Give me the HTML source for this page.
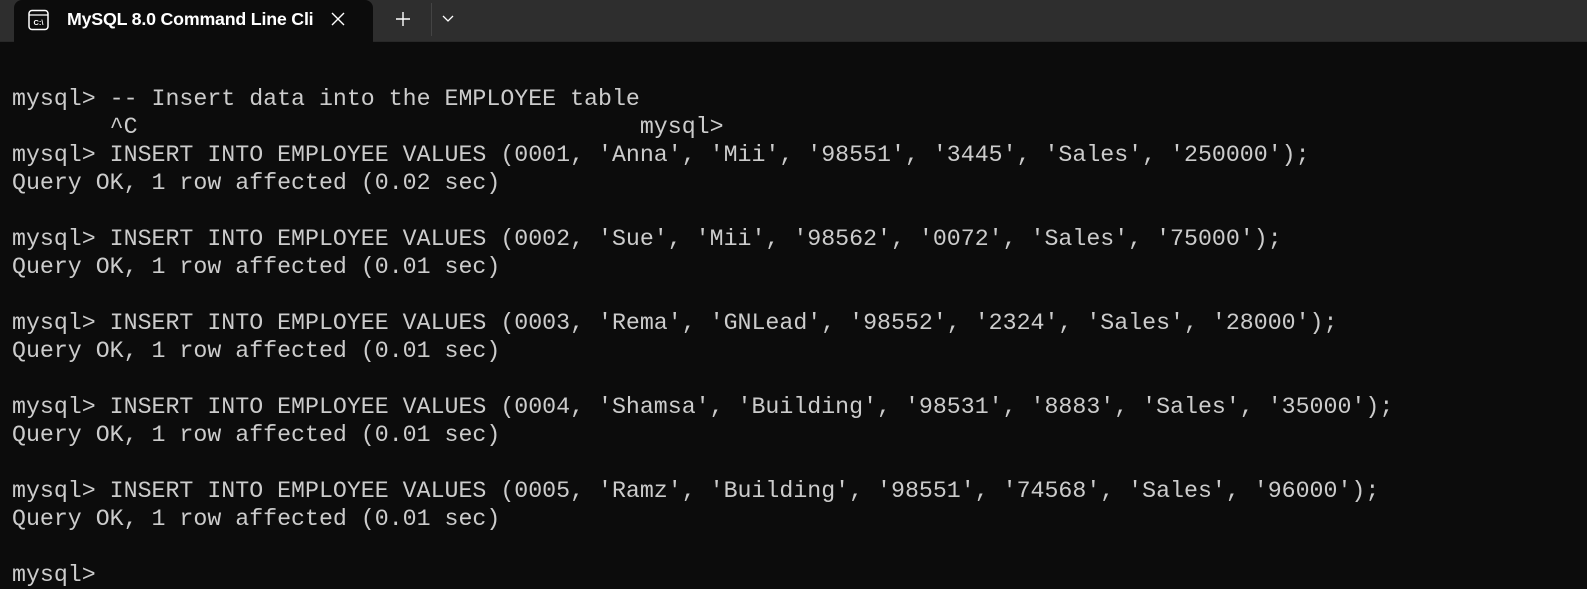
<!DOCTYPE html>
<html><head><meta charset="utf-8"><style>
html,body{margin:0;padding:0;width:1587px;height:586px;overflow:hidden;background:#0c0c0c;}
.bar{position:absolute;left:0;top:0;width:1587px;height:41px;background:#2e2e2e;border-bottom:1px solid #282828;}
.tab{position:absolute;left:14px;top:0;width:359px;height:42px;background:#0c0c0c;border-radius:8px 8px 0 0;}
.title{position:absolute;left:67px;top:9px;font:bold 17.8px "Liberation Sans",sans-serif;color:#fff;letter-spacing:-0.2px;}
.l{position:absolute;left:12px;margin:0;font:23.25px/28px "Liberation Mono",monospace;color:#cccccc;white-space:pre;}
</style></head><body>
<div class="bar"></div>
<div class="tab"></div>
<svg style="position:absolute;left:28px;top:9px" width="22" height="22" viewBox="0 0 22 22"><rect x="1" y="1.5" width="19" height="19" rx="3" fill="none" stroke="#fff" stroke-width="1.5"/><line x1="1" y1="6" x2="20" y2="6" stroke="#fff" stroke-width="1.3"/><text x="10.5" y="16" font-family="Liberation Sans,sans-serif" font-size="7.5" font-weight="bold" fill="#fff" text-anchor="middle">C:\</text></svg>
<div class="title">MySQL 8.0 Command Line Cli</div>
<svg style="position:absolute;left:330px;top:11px" width="16" height="16"><path d="M2 2L14 14M14 2L2 14" stroke="#fff" stroke-width="1.4"/></svg>
<svg style="position:absolute;left:394px;top:10px" width="18" height="18"><path d="M9 2V16M2 9H16" stroke="#fff" stroke-width="1.4"/></svg>
<div style="position:absolute;left:431px;top:3px;width:1px;height:33px;background:#444"></div>
<svg style="position:absolute;left:441px;top:13px" width="14" height="10"><path d="M2 3L7 8L12 3" stroke="#fff" stroke-width="1.3" fill="none"/></svg>
<div class="l" style="top:85px">mysql&gt; -- Insert data into the EMPLOYEE table</div>
<div class="l" style="top:113px">       ^C                                    mysql&gt;</div>
<div class="l" style="top:141px">mysql&gt; INSERT INTO EMPLOYEE VALUES (0001, 'Anna', 'Mii', '98551', '3445', 'Sales', '250000');</div>
<div class="l" style="top:169px">Query OK, 1 row affected (0.02 sec)</div>
<div class="l" style="top:225px">mysql&gt; INSERT INTO EMPLOYEE VALUES (0002, 'Sue', 'Mii', '98562', '0072', 'Sales', '75000');</div>
<div class="l" style="top:253px">Query OK, 1 row affected (0.01 sec)</div>
<div class="l" style="top:309px">mysql&gt; INSERT INTO EMPLOYEE VALUES (0003, 'Rema', 'GNLead', '98552', '2324', 'Sales', '28000');</div>
<div class="l" style="top:337px">Query OK, 1 row affected (0.01 sec)</div>
<div class="l" style="top:393px">mysql&gt; INSERT INTO EMPLOYEE VALUES (0004, 'Shamsa', 'Building', '98531', '8883', 'Sales', '35000');</div>
<div class="l" style="top:421px">Query OK, 1 row affected (0.01 sec)</div>
<div class="l" style="top:477px">mysql&gt; INSERT INTO EMPLOYEE VALUES (0005, 'Ramz', 'Building', '98551', '74568', 'Sales', '96000');</div>
<div class="l" style="top:505px">Query OK, 1 row affected (0.01 sec)</div>
<div class="l" style="top:561px">mysql&gt;</div>
</body></html>
